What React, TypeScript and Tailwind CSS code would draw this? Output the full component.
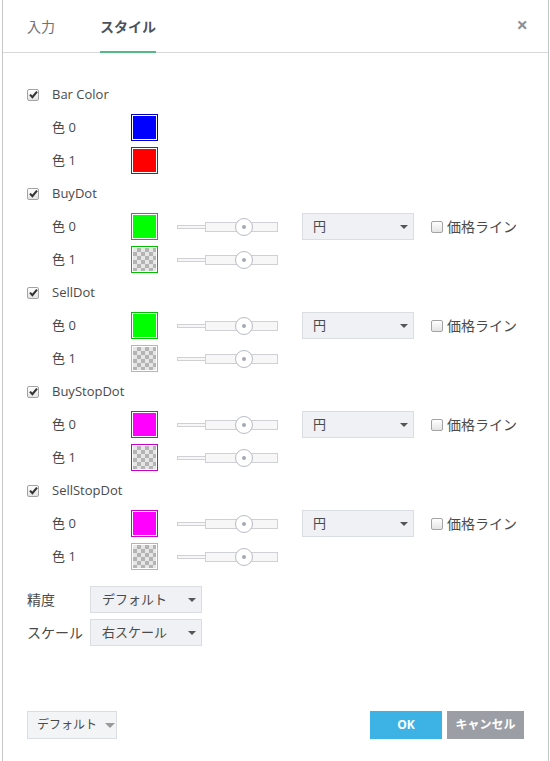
import React from 'react';

type Swatch = { fill: string; border: string; empty?: boolean };

const groups: { name: string; colors: Swatch[]; extras: boolean }[] = [
  {
    name: 'Bar Color',
    extras: false,
    colors: [
      { fill: 'bg-[#0000ff]', border: 'border-[#0000c8]' },
      { fill: 'bg-[#ff0000]', border: 'border-[#c40000]' },
    ],
  },
  {
    name: 'BuyDot',
    extras: true,
    colors: [
      { fill: 'bg-[#00ff00]', border: 'border-[#00c000]' },
      { fill: '', border: 'border-[#00c000]', empty: true },
    ],
  },
  {
    name: 'SellDot',
    extras: true,
    colors: [
      { fill: 'bg-[#00ff00]', border: 'border-[#00c000]' },
      { fill: '', border: 'border-[#b5b5b5]', empty: true },
    ],
  },
  {
    name: 'BuyStopDot',
    extras: true,
    colors: [
      { fill: 'bg-[#ff00ff]', border: 'border-[#c800c8]' },
      { fill: '', border: 'border-[#c800c8]', empty: true },
    ],
  },
  {
    name: 'SellStopDot',
    extras: true,
    colors: [
      { fill: 'bg-[#ff00ff]', border: 'border-[#c800c8]' },
      { fill: '', border: 'border-[#b5b5b5]', empty: true },
    ],
  },
];

function CheckBox({ checked }: { checked: boolean }) {
  return (
    <div className="w-[12px] h-[12px] rounded-[2px] border border-[#a3a3a3] bg-gradient-to-b from-white to-[#e4e4e4] flex items-center justify-center shrink-0">
      {checked && (
        <svg width="9" height="9" viewBox="0 0 9 9">
          <path d="M1 4.6 L3.4 7.2 L8 1.6" fill="none" stroke="#333" strokeWidth="2.1" />
        </svg>
      )}
    </div>
  );
}

function Caret({ color = '#555', w = 8 }: { color?: string; w?: number }) {
  return (
    <svg width={w} height={w / 2} viewBox="0 0 8 4">
      <path d="M0 0 L8 0 L4 4 Z" fill={color} />
    </svg>
  );
}

function ColorBox({ s }: { s: Swatch }) {
  return (
    <div className={`w-[27px] h-[27px] border ${s.border} p-[1px] bg-white shrink-0`}>
      {s.empty ? (
        <div className="w-full h-full bg-[repeating-conic-gradient(#b4b4b4_0%_25%,#e6e6e6_0%_50%)] bg-[length:8px_8px]" />
      ) : (
        <div className={`w-full h-full ${s.fill}`} />
      )}
    </div>
  );
}

function Slider() {
  return (
    <div className="relative w-[101px] h-[18px] flex items-center shrink-0">
      <div className="w-[28px] h-[4px] border border-[#cfd1d5] border-r-0 bg-[#f7f7f7]" />
      <div className="flex-1 h-[10px] border border-[#cfd1d5] bg-[#f7f7f7]" />
      <div className="absolute left-[58px] top-[0.5px] w-[18px] h-[18px] rounded-full border border-[#b8bcc4] bg-white flex items-center justify-center">
        <div className="w-[4px] h-[4px] rounded-full bg-[#a5a9b1]" />
      </div>
    </div>
  );
}

export default function App() {
  return (
    <div className="w-[550px] h-[761px] bg-white overflow-hidden">
      <div
        className="ml-[2px] w-[547px] h-full border-l border-r border-[#c6c6c6] flex flex-col text-[#4a4a4a]"
        style={{ fontFamily: '"Open Sans", "Noto Sans CJK JP", sans-serif' }}
      >
        {/* Tabs */}
        <div className="h-[53px] shrink-0 border-b border-[#d6d8dc] flex items-stretch pl-[24px] pr-[19px]">
          <div className="flex items-center text-[14px] text-[#6d717a] pt-[1px]">入力</div>
          <div className="ml-[45px] relative flex items-center text-[14px] font-bold text-[#4c525e] pt-[1px]">
            スタイル
            <div className="absolute left-0 right-0 bottom-[-1px] h-[2px] bg-[#53b987]" />
          </div>
          <div className="ml-auto flex items-start pt-[10px] pr-[1px] text-[20px] font-bold text-[#8d9098]">×</div>
        </div>

        {/* Body */}
        <div className="pt-[25px] pl-[24px] flex-1 text-[13px]">
          {groups.map((g) => (
            <div key={g.name}>
              <div className="h-[33px] flex items-center">
                <CheckBox checked />
                <span className="ml-[13px]">{g.name}</span>
              </div>
              {g.colors.map((s, i) => (
                <div key={i} className="h-[33px] flex items-center pl-[25px]">
                  <span className="w-[79px]">色 {i}</span>
                  <ColorBox s={s} />
                  {g.extras && (
                    <>
                      <div className="ml-[19px]">
                        <Slider />
                      </div>
                      {i === 0 && (
                        <>
                          <div className="ml-[24px] w-[112px] h-[27px] bg-[#eff1f4] border border-[#dadde2] flex items-center justify-between pl-[10px] pr-[5px]">
                            <span>円</span>
                            <Caret />
                          </div>
                          <div className="ml-[17px] flex items-center">
                            <CheckBox checked={false} />
                            <span className="ml-[4px] text-[14px]">価格ライン</span>
                          </div>
                        </>
                      )}
                    </>
                  )}
                </div>
              ))}
            </div>
          ))}

          <div className="mt-[10px]">
            {[
              ['精度', 'デフォルト'],
              ['スケール', '右スケール'],
            ].map(([label, value]) => (
              <div key={label} className="h-[33px] flex items-center">
                <span className="w-[63px] text-[14px]">{label}</span>
                <div className="w-[112px] h-[27px] bg-[#eff1f4] border border-[#dadde2] flex items-center justify-between pl-[11px] pr-[5px]">
                  <span>{value}</span>
                  <Caret />
                </div>
              </div>
            ))}
          </div>
        </div>

        {/* Footer */}
        <div className="h-[50px] shrink-0 flex items-start pl-[24px] pr-[24px] text-[12px]">
          <div className="w-[90px] h-[28px] border border-[#dadde2] bg-[#f3f4f6] flex items-center pl-[9px] gap-[8px]">
            <span>デフォルト</span>
            <Caret color="#9a9a9a" w={10} />
          </div>
          <div className="ml-auto flex gap-[5px]">
            <div className="w-[72px] h-[28px] bg-[#3cb3e4] text-white font-bold flex items-center justify-center">OK</div>
            <div className="w-[77px] h-[28px] bg-[#9c9ea5] text-white font-bold flex items-center justify-center">キャンセル</div>
          </div>
        </div>
      </div>
    </div>
  );
}
